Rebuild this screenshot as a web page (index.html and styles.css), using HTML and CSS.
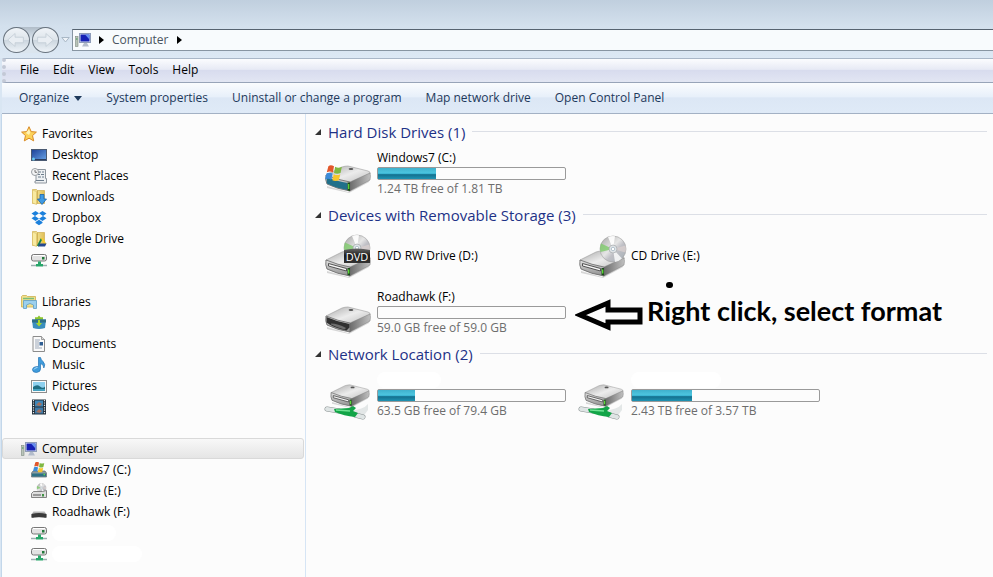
FILE: index.html
```
<!DOCTYPE html>
<html lang="en">
    <head>
        <meta charset="UTF-8">
        <meta name="viewport" content="width=device-width, initial-scale=1.0">
        <title>Computer</title>
        <link rel="stylesheet" href="styles.css">
    </head>

    <body>
        <!-- icons used in both panes -->
        <svg class="sprite" aria-hidden="true">
            <defs>
                <linearGradient id="top" x1="0" y1="0" x2="1" y2="1">
                    <stop offset="0" stop-color="#a8a8a8"/>
                    <stop offset="0.5" stop-color="#ececec"/>
                    <stop offset="1" stop-color="#bcbcbc"/>
                </linearGradient>
                <linearGradient id="front" x1="0" y1="0" x2="0" y2="1">
                    <stop offset="0" stop-color="#e4e4e4"/>
                    <stop offset="1" stop-color="#8c8c8c"/>
                </linearGradient>
                <linearGradient id="side" x1="0" y1="0" x2="1" y2="0">
                    <stop offset="0" stop-color="#6c6c6c"/>
                    <stop offset="1" stop-color="#c0c0c0"/>
                </linearGradient>
                <linearGradient id="blue" x1="0" y1="0" x2="1" y2="1">
                    <stop offset="0" stop-color="#1b3f96"/>
                    <stop offset="1" stop-color="#6ba6e8"/>
                </linearGradient>
                <linearGradient id="gold" x1="0" y1="0" x2="1" y2="0">
                    <stop offset="0" stop-color="#fbf2b0"/>
                    <stop offset="1" stop-color="#dfbe55"/>
                </linearGradient>
                <linearGradient id="disc" x1="0" y1="0" x2="1" y2="1">
                    <stop offset="0" stop-color="#a4a4a4"/>
                    <stop offset="0.45" stop-color="#e6e6e6"/>
                    <stop offset="0.6" stop-color="#c0c0c6"/>
                    <stop offset="1" stop-color="#a6b0b6"/>
                </linearGradient>
                <linearGradient id="plate" x1="0" y1="0" x2="0" y2="1">
                    <stop offset="0" stop-color="#666"/>
                    <stop offset="0.5" stop-color="#1c1c1c"/>
                    <stop offset="1" stop-color="#333"/>
                </linearGradient>
            </defs>

            <symbol id="i-drive" viewBox="0 0 46 28">
                <path d="M2 21l21 6 22-14-1 4-20 11-22-5z" fill="#000" opacity="0.15"/>
                <path d="M1 10L17 2q3-1 6-1l20 5q3 1 2 3L25 18 2 13z" fill="url(#top)" stroke="#9a9a9a" stroke-width="0.6"/>
                <path d="M25 17L45 8q1 3 0 7L25 26z" fill="url(#side)" stroke="#808080" stroke-width="0.5"/>
                <path d="M1 10q12 5 24 7v9Q12 24 2 19 0 15 1 10z" fill="url(#front)" stroke="#666" stroke-width="0.8"/>
                <ellipse cx="26" cy="4" rx="2.4" ry="1" fill="#555"/>
            </symbol>

            <symbol id="i-flag" viewBox="0 0 16 16">
                <path d="M3 2q2-1.600 5 0L7 7.500Q4.500 6 1.600 7.300z" fill="#e2572b"/>
                <path d="M9 2.500q3 1.500 6 0L13.800 8q-3 1.400-5.800 0z" fill="#7fb841"/>
                <path d="M1.400 8.300Q4 7 6.800 8.500L5.500 14Q3 12.500 0 13.700z" fill="#3c8bd8"/>
                <path d="M7.800 9q3 1.500 5.800 0l-1.300 5.500q-3 1.300-5.800 0z" fill="#f7c52c"/>
            </symbol>

            <symbol id="i-hdd" viewBox="0 0 46 28">
                <use href="#i-drive" width="46" height="28"/>
                <path d="M1.500 11.500q11 5 21 6.500v7Q11 23 2 18.500z" fill="#20708a"/>
                <path d="M22.500 17.500l2.500 0v8.500l-2.500-.5z" fill="#1c4a1c"/>
                <path d="M23.700 19v5" stroke="#62e03a" stroke-width="1.200"/>
                <use href="#i-flag" x="0" y="-1" width="18" height="18"/>
            </symbol>

            <symbol id="i-usb" viewBox="0 0 46 28">
                <use href="#i-drive" width="46" height="28"/>
                <path d="M1.500 11q11 5 23 7v3.500l-3 3Q10 22 4.500 18.500l-3-2z" fill="#303030"/>
                <path d="M6 17.500q7 0 15 4.500l-1.500 1.500q-8-2-13.500-5z" fill="#6c6c6c"/>
            </symbol>

            <symbol id="i-slot" viewBox="0 0 46 28">
                <use href="#i-drive" width="46" height="28"/>
                <path d="M3.500 13.500l18 5v2.500l-18-5z" fill="#f5f5f5" stroke="#444" stroke-width="0.900"/>
                <path d="M22.500 18l2.500 0v7.500l-2.500-.5z" fill="#1c4a1c"/>
                <path d="M23.700 19.500v4" stroke="#62e03a" stroke-width="1.300"/>
            </symbol>

            <symbol id="i-disc" viewBox="0 0 28 28">
                <circle cx="14" cy="14" r="13" fill="url(#disc)" stroke="#a0a0a0" stroke-width="0.600"/>
                <path d="M14 14L2 8.500A13 13 0 0 0 1.500 17z" fill="#7ecb6c" opacity="0.800"/>
                <path d="M14 14L9 2a13 13 0 0 1 7-.8z" fill="#fff" opacity="0.900"/>
                <path d="M14 14l12.500-3.500a13 13 0 0 1 0 7z" fill="#ddd2d0" opacity="0.700"/>
                <path d="M14 14l2 13a13 13 0 0 0 7-3.500z" fill="#fff" opacity="0.800"/>
                <circle cx="14" cy="14" r="4" fill="#dfe3e6" stroke="#a5a9ac" stroke-width="0.700"/>
                <circle cx="14" cy="14" r="1.700" fill="#fff" stroke="#8fa6b5" stroke-width="0.600"/>
            </symbol>

            <symbol id="i-cd" viewBox="0 0 46 44">
                <use href="#i-slot" y="16" width="46" height="28"/>
                <use href="#i-disc" x="20" y="1" width="28" height="28"/>
            </symbol>

            <symbol id="i-dvd" viewBox="0 0 46 44">
                <use href="#i-slot" y="16" width="46" height="28"/>
                <use href="#i-disc" x="18" y="0" width="28" height="28"/>
                <path d="M19 16q13-3 26 0v13H19z" fill="url(#plate)"/>
                <text x="32" y="27" class="disc-text">DVD</text>
            </symbol>

            <symbol id="i-net" viewBox="0 0 46 36">
                <path d="M26 26q12 0 17-6v6l-6 8z" fill="#e3e7e7"/>
                <use href="#i-slot" x="5" y="0" width="40" height="24" preserveAspectRatio="none"/>
                <path d="M2 25l12 2M30 31l8 2" fill="none" stroke="#8b9292" stroke-width="5" stroke-linecap="round"/>
                <path d="M2 25l12 2M30 31l8 2" fill="none" stroke="#dfe5e5" stroke-width="4" stroke-linecap="round"/>
                <path d="M9 25l15-1 4-2 3 2-3 3 5 2-3 4q-11-1-20-5z" fill="#12a447"/>
                <path d="M11 26l14 1" stroke="#6fe293" stroke-width="1.500"/>
            </symbol>

            <symbol id="i-netsmall" viewBox="0 0 16 16">
                <rect x="0.500" y="2.500" width="15" height="6.500" rx="2" fill="#e2e2e2" stroke="#777"/>
                <path d="M2 3.500h12" stroke="#fff"/>
                <rect x="11" y="5" width="2.500" height="2.500" fill="#22783a"/>
                <path d="M7 9.500h3V12h2v2.500H5V12h2z" fill="#28a76a"/>
                <path d="M0 13.500h5M12 13.500h4" stroke="#9cafb0" stroke-width="1.500"/>
            </symbol>

            <symbol id="i-computer" viewBox="0 0 16 16">
                <rect x="0.500" y="4.500" width="2.500" height="10" fill="#b9c4b9" stroke="#7d8a80" stroke-width="0.600"/>
                <path d="M1 7h1.500" stroke="#3f9a50"/>
                <rect x="4.500" y="1.500" width="11" height="9" fill="#dfe6f2" stroke="#8e9cb8"/>
                <rect x="5.500" y="2.500" width="9" height="7" fill="#1520b4"/>
                <path d="M10 2.500h4.500v5z" fill="#6590ee"/>
                <path d="M9 11h3l2 3.500H7z" fill="#b3bccb"/>
            </symbol>

            <symbol id="i-star" viewBox="0 0 16 16">
                <path d="M8 .7l2.200 4.900 5.200.5-3.900 3.500 1.200 5.300L8 12.200l-4.700 2.700 1.200-5.300L.6 6.100l5.200-.5z" fill="#fcd35a" stroke="#d98b28"/>
                <path d="M8 3l1.300 3.500L8 9 5 7z" fill="#fff3b8"/>
            </symbol>

            <symbol id="i-desktop" viewBox="0 0 16 16">
                <rect x="0.500" y="2.500" width="15" height="11" fill="url(#blue)" stroke="#4a5a72"/>
                <path d="M1 12.500h14" stroke="#2b3e60"/>
                <circle cx="2.500" cy="12" r="1.500" fill="#68c6f0"/>
            </symbol>

            <symbol id="i-recent" viewBox="0 0 16 16">
                <path d="M5 1.500h9.500v9h1V15H4v-2h1z" fill="#edf0f2" stroke="#8e969e"/>
                <path d="M7 4h3m1 0h2M7 6.500h2m1 0h3M7 9h3m1 0h2M5 12.500h8" stroke="#6c7c8c"/>
                <circle cx="4" cy="4" r="3.500" fill="#f3f4f5" stroke="#9a9fa4"/>
                <path d="M4 2v2.300h2" fill="none" stroke="#555" stroke-width="0.800"/>
            </symbol>

            <symbol id="i-folder" viewBox="0 0 16 16">
                <path d="M1.500.5h4l1 1h7v13h-12z" fill="url(#gold)" stroke="#cfae50" stroke-width="0.700"/>
                <path d="M6.500 1.500v13" stroke="#c9a949" stroke-width="0.800"/>
                <path d="M1.500 1l4 1.500v13l-4-1.500z" fill="#f8eaa0" stroke="#d6b95e" stroke-width="0.600"/>
            </symbol>

            <symbol id="i-download" viewBox="0 0 16 16">
                <use href="#i-folder" width="16" height="16"/>
                <path d="M9 5.500h4V10h2.500L11 15.500 6.500 10H9z" fill="#3f9ae2" stroke="#1d64ac" stroke-width="0.800"/>
            </symbol>

            <symbol id="i-dropbox" viewBox="0 0 16 16">
                <path d="M4.500 1L8 3.300 4 6 .5 3.500zM11.500 1L8 3.300 12 6l3.500-2.500zM4 6l4 2.700L4.500 11 .5 8.300zM12 6l3.500 2.300-4 2.700L8 8.700zM8 9.700l3.500 2.300v1L8 15.200 4.500 13v-1z" fill="#1b80dc"/>
            </symbol>

            <symbol id="i-gdrive" viewBox="0 0 16 16">
                <use href="#i-folder" width="16" height="16"/>
                <path d="M10 7l-4 7.500 1.500 1L11 9z" fill="#17824f"/>
                <path d="M10 7h2l3.500 6h-3z" fill="#f4cc32"/>
                <path d="M8.500 12.500h7L14 15.500H7z" fill="#24488e"/>
            </symbol>

            <symbol id="i-libraries" viewBox="0 0 16 16">
                <path d="M.5 2.500l1-1h4l1 1h8V13H.5z" fill="#f2df8c" stroke="#cdb04e" stroke-width="0.800"/>
                <path d="M2 4.500h11" stroke="#7bbd78" stroke-width="1.500"/>
                <path d="M2.500 6.500h13v8h-3V11q-3.500-3-7 0v3.500h-3z" fill="#9cd0ee" stroke="#5d9dc8" stroke-width="0.800"/>
            </symbol>

            <symbol id="i-apps" viewBox="0 0 16 16">
                <path d="M8 .5l1.500 1.700h2.500V5H4V2.200h2.500z" fill="#8cc52e"/>
                <path d="M1 4.500h14l-1 8.500q-6 2-12 0z" fill="#3a8fbe"/>
                <path d="M1 4.500h14v3H1z" fill="#2f6f86"/>
                <path d="M7 5h2v3h2l-3 3.500L5 8h2z" fill="#a8d72e"/>
            </symbol>

            <symbol id="i-documents" viewBox="0 0 16 16">
                <path d="M2 .5h8.500l3 3v12H2z" fill="#fafafa" stroke="#8c8c8c"/>
                <path d="M10.500.5v3h3" fill="#ddd" stroke="#8c8c8c" stroke-width="0.800"/>
                <path d="M4 4h5M4 6h4M4 8h4M4 10h4M4 12h7" stroke="#9da8b8"/>
                <rect x="8.500" y="6" width="3.500" height="3.500" fill="#2f5e93"/>
            </symbol>

            <symbol id="i-music" viewBox="0 0 16 16">
                <path d="M7.500.5h2q.5 2.500 2.500 4 3 3 .8 6.500.2-3.500-3.300-4.500V12q0 3-4 3.500-4 0-4-2.700 0-3.300 6-3.300z" fill="#3f9cdc" stroke="#2273b4" stroke-width="0.700"/>
                <path d="M3 12.500q1-2 3.500-2" fill="none" stroke="#b4e0fa"/>
            </symbol>

            <symbol id="i-pictures" viewBox="0 0 16 16">
                <rect x="0.500" y="2.500" width="15" height="12" fill="#fafafa" stroke="#8d8d8d"/>
                <rect x="2" y="4" width="12" height="9" fill="#8ed0ee"/>
                <path d="M2 9q4-3 7-.5t5 0V13H2z" fill="#1f6d82"/>
                <path d="M2 11h12v2H2z" fill="#45a2c0"/>
            </symbol>

            <symbol id="i-videos" viewBox="0 0 16 16">
                <rect x="1" y="0.500" width="14" height="15" fill="#22303c"/>
                <path d="M4 1.500h8v6H4z" fill="#3f87b8"/>
                <path d="M4 8.500h8v6H4z" fill="#3d7aa8"/>
                <path d="M5 6l3-3 3 2-2 2zM5 13l3-3 3 2-2 2z" fill="#a5705c"/>
                <path d="M2.500 1v14M13.500 1v14" stroke="#e8e8e8" stroke-width="1.200" stroke-dasharray="1.200 1.200"/>
            </symbol>

            <symbol id="i-osdrive" viewBox="0 0 16 16">
                <path d="M2 9h12l1.500 2v4H.5v-4z" fill="#8a9ba0" stroke="#5f6c70" stroke-width="0.700"/>
                <path d="M1 11.500h14v3H1z" fill="#2e7186"/>
                <path d="M12.500 12.500h1.500" stroke="#63d34a" stroke-width="1.500"/>
                <use href="#i-flag" x="2" y="-1" width="12" height="12"/>
            </symbol>

            <symbol id="i-cdsmall" viewBox="0 0 16 16">
                <use href="#i-disc" x="5.500" y="0" width="10" height="10"/>
                <path d="M2.500 8.500h9l4-1v7h-15v-4z" fill="#dedede" stroke="#777" stroke-width="0.900"/>
                <path d="M2 12h8" stroke="#555"/>
                <path d="M12 11v2.500" stroke="#2f8a33" stroke-width="1.800"/>
            </symbol>

            <symbol id="i-usbsmall" viewBox="0 0 16 16">
                <path d="M2.500 7.500h11l2 3v3H.5v-3z" fill="#b5b5b5"/>
                <path d="M.5 10q7.500-2 15 0v3.500q-1 .5-2.500 0-5-1-10 0-1.500.5-2.500 0z" fill="#3a3a3a"/>
            </symbol>
        </svg>

        <header class="address-row">
            <div class="history">
                <button class="round" aria-label="Back">
                    <svg viewBox="0 0 26 26"><path d="M4 13l8-7v4h9v6h-9v4z"/></svg>
                </button>
                <button class="round" aria-label="Forward">
                    <svg viewBox="0 0 26 26"><path d="M22 13l-8-7v4H5v6h9v4z"/></svg>
                </button>
            </div>
            <button class="recent" aria-label="Recent pages">
                <svg width="9" height="6" viewBox="0 0 9 6"><path d="M.8.5h7.400L4.500 5z" fill="#eef3f8" stroke="#a9b8c6"/></svg>
            </button>
            <nav class="address">
                <svg class="icon" aria-hidden="true"><use href="#i-computer"/></svg>
                <span class="crumb-arrow"></span>
                <a href="#">Computer</a>
                <span class="crumb-arrow"></span>
            </nav>
        </header>

        <nav class="menu-bar">
            <button>File</button>
            <button>Edit</button>
            <button>View</button>
            <button>Tools</button>
            <button>Help</button>
        </nav>

        <div class="tool-bar">
            <button>Organize <span class="down"></span></button>
            <button>System properties</button>
            <button>Uninstall or change a program</button>
            <button>Map network drive</button>
            <button>Open Control Panel</button>
        </div>

        <div class="panes">
            <nav class="tree">
                <ul>
                    <li class="root"><a href="#"><svg class="icon"><use href="#i-star"/></svg>Favorites</a></li>
                    <li><a href="#"><svg class="icon"><use href="#i-desktop"/></svg>Desktop</a></li>
                    <li><a href="#"><svg class="icon"><use href="#i-recent"/></svg>Recent Places</a></li>
                    <li><a href="#"><svg class="icon"><use href="#i-download"/></svg>Downloads</a></li>
                    <li><a href="#"><svg class="icon"><use href="#i-dropbox"/></svg>Dropbox</a></li>
                    <li><a href="#"><svg class="icon"><use href="#i-gdrive"/></svg>Google Drive</a></li>
                    <li><a href="#"><svg class="icon"><use href="#i-netsmall"/></svg>Z Drive</a></li>
                </ul>
                <ul>
                    <li class="root"><a href="#"><svg class="icon"><use href="#i-libraries"/></svg>Libraries</a></li>
                    <li><a href="#"><svg class="icon"><use href="#i-apps"/></svg>Apps</a></li>
                    <li><a href="#"><svg class="icon"><use href="#i-documents"/></svg>Documents</a></li>
                    <li><a href="#"><svg class="icon"><use href="#i-music"/></svg>Music</a></li>
                    <li><a href="#"><svg class="icon"><use href="#i-pictures"/></svg>Pictures</a></li>
                    <li><a href="#"><svg class="icon"><use href="#i-videos"/></svg>Videos</a></li>
                </ul>
                <ul>
                    <li class="root selected"><a href="#"><svg class="icon"><use href="#i-computer"/></svg>Computer</a></li>
                    <li><a href="#"><svg class="icon"><use href="#i-osdrive"/></svg>Windows7 (C:)</a></li>
                    <li><a href="#"><svg class="icon"><use href="#i-cdsmall"/></svg>CD Drive (E:)</a></li>
                    <li><a href="#"><svg class="icon"><use href="#i-usbsmall"/></svg>Roadhawk (F:)</a></li>
                    <li><a href="#"><svg class="icon"><use href="#i-netsmall"/></svg><span class="blank"></span></a></li>
                    <li><a href="#"><svg class="icon"><use href="#i-netsmall"/></svg><span class="blank wide"></span></a></li>
                </ul>
            </nav>

            <main class="content">
                <section>
                    <h2>Hard Disk Drives (1)</h2>
                    <div class="tiles">
                        <div class="tile">
                            <svg class="drive" viewBox="0 0 46 44"><use href="#i-hdd" y="14" width="46" height="28"/></svg>
                            <div class="info">
                                <p class="name">Windows7 (C:)</p>
                                <div class="bar"><div class="used" style="width: 31%"></div></div>
                                <p class="free">1.24 TB free of 1.81 TB</p>
                            </div>
                        </div>
                    </div>
                </section>

                <section>
                    <h2>Devices with Removable Storage (3)</h2>
                    <div class="tiles">
                        <div class="tile">
                            <svg class="drive"><use href="#i-dvd"/></svg>
                            <div class="info"><p class="name">DVD RW Drive (D:)</p></div>
                        </div>
                        <div class="tile">
                            <svg class="drive"><use href="#i-cd"/></svg>
                            <div class="info"><p class="name">CD Drive (E:)</p></div>
                        </div>
                        <div class="tile">
                            <svg class="drive" viewBox="0 0 46 44"><use href="#i-usb" y="16" width="46" height="28"/></svg>
                            <div class="info">
                                <p class="name">Roadhawk (F:)</p>
                                <div class="bar"></div>
                                <p class="free">59.0 GB free of 59.0 GB</p>
                            </div>
                        </div>
                    </div>
                </section>

                <section>
                    <h2>Network Location (2)</h2>
                    <div class="tiles">
                        <div class="tile">
                            <svg class="drive" viewBox="0 0 46 44"><use href="#i-net" y="11" width="46" height="36"/></svg>
                            <div class="info">
                                <p class="name blank"></p>
                                <div class="bar"><div class="used" style="width: 20%"></div></div>
                                <p class="free">63.5 GB free of 79.4 GB</p>
                            </div>
                        </div>
                        <div class="tile">
                            <svg class="drive" viewBox="0 0 46 44"><use href="#i-net" y="11" width="46" height="36"/></svg>
                            <div class="info">
                                <p class="name blank wide"></p>
                                <div class="bar"><div class="used" style="width: 32%"></div></div>
                                <p class="free">2.43 TB free of 3.57 TB</p>
                            </div>
                        </div>
                    </div>
                </section>

                <!-- hint drawn over the tiles -->
                <div class="note">
                    <svg width="68" height="34" viewBox="0 0 68 34" aria-hidden="true">
                        <path d="M5 17L33 5v7h32v12H33v5z" fill="#fcfcfc" stroke="#000" stroke-width="5"/>
                    </svg>
                    <span>Right click, select format</span>
                </div>
                <span class="dot"></span>
            </main>
        </div>
    </body>
</html>
```
FILE: styles.css
```
*{
    box-sizing: border-box;
}
body{
    margin: 0;
    min-height: 100vh;
    display: flex;
    flex-direction: column;
    font-family: "Open Sans", "Noto Sans", sans-serif;
    font-size: 12px;
    line-height: 16px;
    color: #000;
    background: #d9e6f3;
}
button{
    border: none;
    padding: 0;
    background: none;
    font: inherit;
    color: inherit;
}
a{
    color: inherit;
    text-decoration: none;
}
ul, p, h2{
    margin: 0;
    padding: 0;
    list-style: none;
    font-weight: normal;
}
symbol{
    overflow: visible;
}
.sprite{
    position: absolute;
    width: 0;
    height: 0;
}
.icon{
    width: 16px;
    height: 16px;
    flex: none;
}

/* address bar */
.address-row{
    display: flex;
    align-items: center;
    height: 58px;
    padding: 22px 0 0 3px;
    background: linear-gradient(#c0cfde, #d3e0ed 26px, #dce8f4);
}
.history{
    display: flex;
    gap: 2px;
    border-radius: 13px;
    background: linear-gradient(#b0bcc8, #dbe5ee 12px);
}
.round{
    width: 27px;
    height: 26px;
    border: 1px solid #68737e;
    border-radius: 50%;
    background: linear-gradient(#f0f4f8, #dde4ea 50%, #ccd6df 52%, #eef3f8);
}
.round svg{
    display: block;
    width: 24px;
    height: 24px;
    fill: #e9eef3;
    stroke: #c6cfd8;
}
.recent{
    width: 13px;
    display: flex;
    justify-content: center;
}
.address{
    flex: 1;
    display: flex;
    align-items: center;
    gap: 8px;
    height: 22px;
    padding-left: 2px;
    border: 1px solid #8795a2;
    border-top-color: #566370;
    border-right: none;
    background: #f8fbfd;
    color: #4a5560;
}
.crumb-arrow{
    border: 4px solid transparent;
    border-left: 5px solid #000;
    border-right: none;
}

/* menu and command bars */
.menu-bar{
    display: flex;
    align-items: center;
    gap: 14px;
    height: 25px;
    margin-left: 2px;
    padding: 0 0 1px 14px;
    border-top: 1px solid #a9b7c8;
    border-bottom: 1px solid #98a4b8;
    border-left: 4px dotted #c3c9d6;
    background: linear-gradient(#fbfcfe, #e7eaf5 45%, #d8dcee 50%, #e2e6f3);
}
.tool-bar{
    display: flex;
    align-items: center;
    gap: 24px;
    height: 31px;
    margin-left: 2px;
    padding-left: 17px;
    border-bottom: 1px solid #a3b1c4;
    background: linear-gradient(#fafcfe, #e8f0fa 45%, #dce7f5 50%, #dfeaf7);
    color: #1e395b;
}
.down{
    display: inline-block;
    margin-left: 2px;
    border: 4px solid transparent;
    border-top: 5px solid #1e395b;
    border-bottom: none;
    vertical-align: 1px;
}

/* panes */
.panes{
    flex: 1;
    display: flex;
    margin-left: 1px;
    border-left: 1px solid #c3d7ea;
    background: #fcfcfc;
}
.tree{
    width: 304px;
    flex: none;
    padding: 9px 1px 0 0;
    border-right: 1px solid #d6e5f5;
}
.tree ul{
    margin-bottom: 21px;
}
.tree a{
    display: flex;
    align-items: center;
    gap: 5px;
    height: 21px;
    padding-left: 29px;
}
.tree .root a{
    padding-left: 19px;
}
.tree .selected a{
    padding-left: 18px;
    border: 1px solid #d9d9d9;
    border-radius: 3px;
    background: linear-gradient(#f8f8f8, #e5e5e5);
}
.blank{
    width: 64px;
    height: 16px;
    border-radius: 8px;
    background: #fff;
}
.wide{
    width: 90px;
}
.content{
    position: relative;
    flex: 1;
    padding: 4px 6px 0 9px;
}
.content h2{
    display: flex;
    align-items: center;
    gap: 7px;
    height: 27px;
    font-size: 15px;
    line-height: 20px;
    color: #1e3287;
}
.content h2::before{
    content: "";
    border-left: 6px solid transparent;
    border-bottom: 6px solid #333;
}
.content h2::after{
    content: "";
    flex: 1;
    height: 1px;
    background: #dcdfe6;
}
.tiles{
    display: grid;
    grid-template-columns: repeat(auto-fill, 254px);
    padding-left: 10px;
}
.tile{
    display: flex;
    align-items: center;
    gap: 6px;
    height: 56px;
}
.drive{
    width: 46px;
    height: 44px;
    flex: none;
    overflow: visible;
}
.disc-text{
    font-size: 11px;
    fill: #fff;
    text-anchor: middle;
}
.info{
    width: 189px;
}
.bar{
    height: 13px;
    margin: 1px 0;
    border: 1px solid #9a9a9a;
    border-radius: 2px;
    background: #fcfcfc;
}
.used{
    height: 100%;
    background: linear-gradient(#3fb0cc, #4cc4de 40%, #35b0cf 55%, #14708e 60%, #1f93b3);
}
.free{
    color: #6d6d6d;
}

.note{
    position: absolute;
    top: 181px;
    left: 269px;
    display: flex;
    align-items: flex-start;
    gap: 4px;
    font-family: Lato, sans-serif;
    font-size: 27px;
    line-height: 32px;
    font-weight: bold;
    white-space: nowrap;
}
.note svg{
    margin-top: 3px;
}
.dot{
    position: absolute;
    top: 168px;
    left: 360px;
    width: 7px;
    height: 6px;
    border-radius: 3px;
    background: #000;
}
```
